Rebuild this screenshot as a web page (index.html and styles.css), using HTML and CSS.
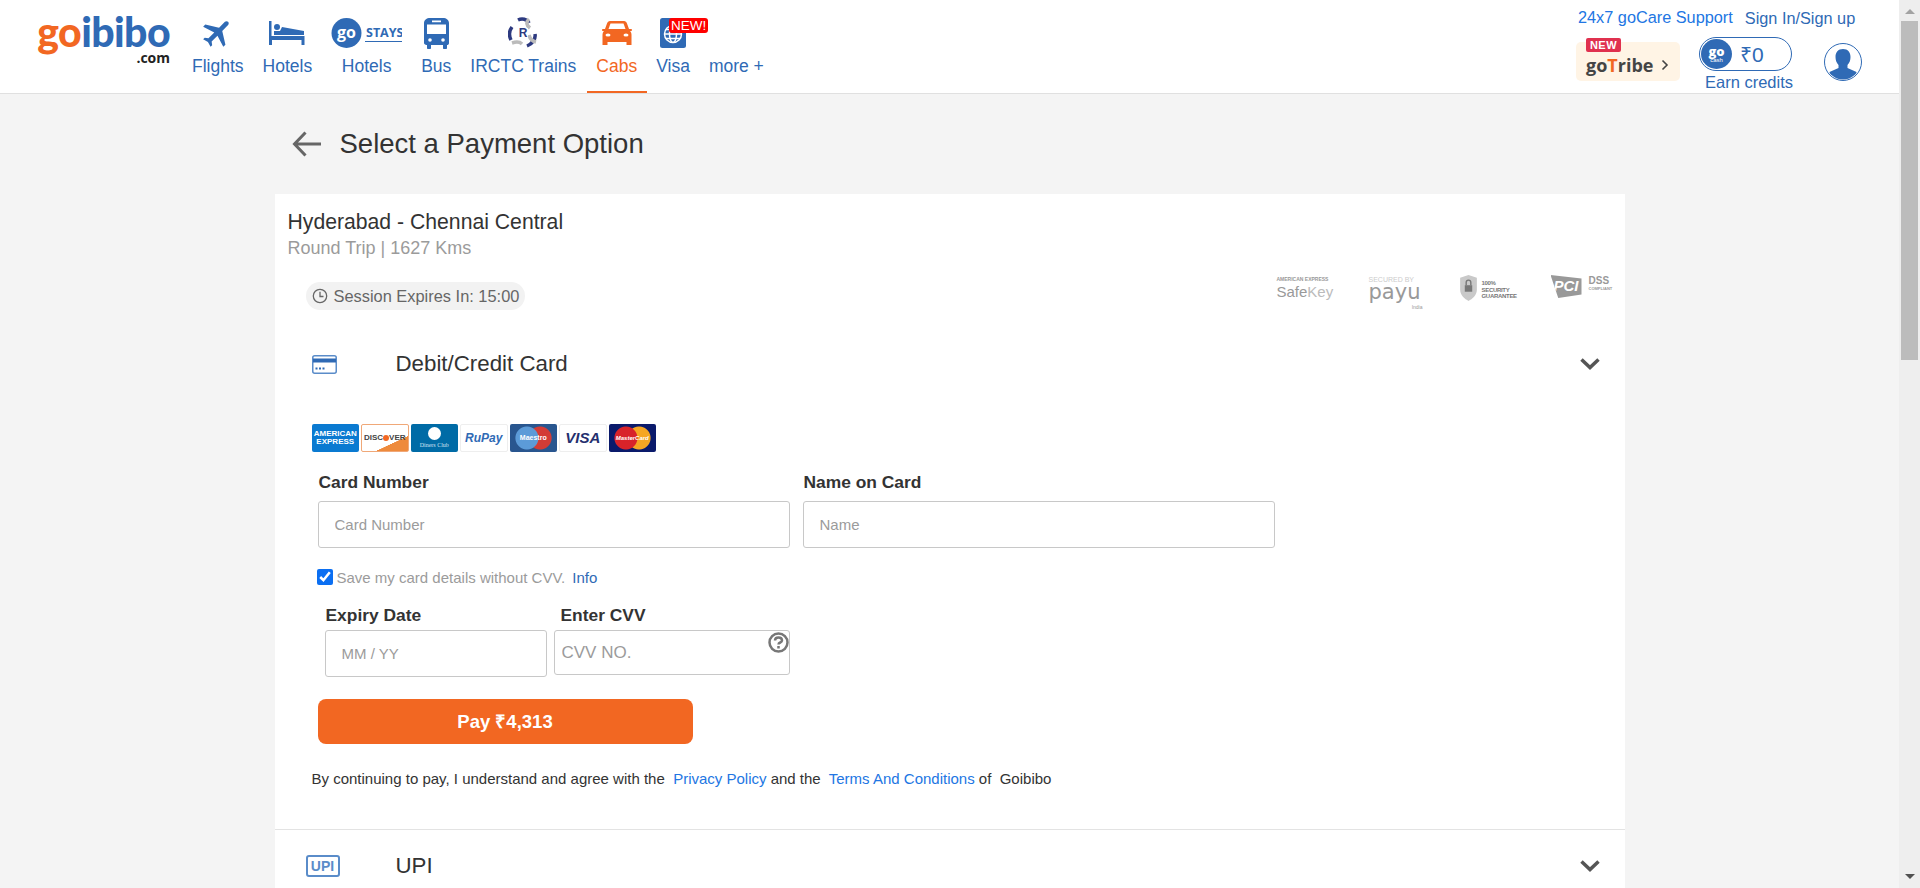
FILE: index.html
```html
<!DOCTYPE html>
<html lang="en">
<head>
    <meta charset="UTF-8">
    <meta name="viewport" content="width=device-width, initial-scale=1.0">
    <title>Select a Payment Option</title>
    <link rel="stylesheet" href="styles.css">
</head>
<body>
    <div class="page">
        <header class="topbar">
            <a class="logo">
                <span class="logo-word"><span class="logo-go">go</span>ibibo</span>
                <span class="logo-com">.com</span>
            </a>

            <nav class="nav">
                <a class="nav-item">
                    <span class="nav-icon">
                        <svg width="36" height="36" viewBox="0 0 24 24"><path fill="#2f6ab5" transform="rotate(45 12 12)" d="M21 16v-2l-8-5V3.5c0-.83-.67-1.5-1.5-1.5S10 2.67 10 3.5V9l-8 5v2l8-2.5V19l-2 1.5V22l3.5-1 3.5 1v-1.5L13 19v-5.5l8 2.5z"/></svg>
                    </span>
                    Flights
                </a>
                <a class="nav-item">
                    <span class="nav-icon">
                        <svg width="36" height="24" viewBox="0 0 36 24"><path fill="#2f6ab5" d="M0 0h2.500v15h33v9h-3v-5H3v5H0z"/><circle cx="8" cy="6" r="3" fill="#2f6ab5"/><path fill="#2f6ab5" d="M5 10h6l2-4 22 4v4H5z"/></svg>
                    </span>
                    Hotels
                </a>
                <a class="nav-item">
                    <span class="nav-icon">
                        <svg width="71" height="32" viewBox="0 0 71 32"><circle cx="15.500" cy="16" r="15" fill="#2f6ab5"/><text x="15.500" y="21" class="stays-go">go</text><text x="35" y="20" class="stays-word">STAYS</text><path stroke="#2f6ab5" stroke-width="1" d="M34 24.500h37"/></svg>
                    </span>
                    Hotels
                </a>
                <a class="nav-item">
                    <span class="nav-icon">
                        <svg width="25" height="31" viewBox="0 0 25 31"><path fill="#2f6ab5" d="M6 0h13c3.300 0 6 2 6 5v20c0 1.500-1 2-2 2v3c0 .6-.5 1-1 1h-2c-.6 0-1-.4-1-1v-3H7v3c0 .6-.4 1-1 1H4c-.5 0-1-.4-1-1v-3c-1 0-3-.5-3-2V5c0-3 2.700-5 6-5z"/><path fill="#fff" d="M3 6.500h19V16H3zM8 2.500h9v1.700H8z"/><circle cx="6" cy="22" r="1.800" fill="#fff"/><circle cx="19" cy="22" r="1.800" fill="#fff"/></svg>
                    </span>
                    Bus
                </a>
                <a class="nav-item">
                    <span class="nav-icon">
                        <svg width="30" height="32" viewBox="0 0 30 32"><path fill="none" stroke="#2d3a80" stroke-width="3.500" d="M10 3c4-2 9-1 11 3M27 17c1 5-3 10-8 12M3 23c-2-4-2-9 1-13"/><path fill="none" stroke="#bbb" stroke-width="3.500" d="M21 2c-3 3-3 6 1 9M28 25c-4-1-6-3-7-7M4 26c3-1 7-2 10 1"/><rect x="10" y="11" width="10" height="10" fill="#fff"/><text x="15" y="20" class="irctc-letter">R</text></svg>
                    </span>
                    IRCTC Trains
                </a>
                <a class="nav-item is-active">
                    <span class="nav-icon">
                        <svg width="30" height="24" viewBox="0 0 30 24"><path fill="#f26722" d="M8 0h14c1.500 0 2.500 1 3 2.500L27 8h2c.6 0 1 .5 1 1s-.4 1-1 1h-1c1 1 1.500 2 1.500 4v10h-5v-3H5.500v3h-5V14c0-2 .5-3 1.500-4H1c-.6 0-1-.5-1-1s.4-1 1-1h2l2-5.500C5.500 1 6.500 0 8 0z"/><path fill="#fff" d="M8.500 2.500h13L23.500 8h-17z"/><ellipse cx="6" cy="14" rx="2.500" ry="1.500" fill="#fff"/><ellipse cx="24" cy="14" rx="2.500" ry="1.500" fill="#fff"/></svg>
                    </span>
                    Cabs
                </a>
                <a class="nav-item">
                    <span class="nav-icon">
                        <svg width="26" height="30" viewBox="0 0 26 30"><rect width="26" height="30" rx="2.500" fill="#2f6ab5"/><g fill="none" stroke="#fff" stroke-width="1.500"><circle cx="13" cy="16" r="8.500"/><ellipse cx="13" cy="16" rx="3.500" ry="8.500"/><path d="M4.500 16h17M6 11.500h14M6 20.500h14"/></g></svg>
                        <span class="new-flag">NEW!</span>
                    </span>
                    Visa
                </a>
                <a class="nav-item nav-more">more +</a>
            </nav>

            <div class="account">
                <div class="account-links">
                    <a class="care-link">24x7 goCare Support</a>
                    <a class="sign-link">Sign In/Sign up</a>
                </div>
                <div class="account-row">
                    <a class="gotribe">
                        <span class="gotribe-new">NEW</span>
                        <span class="gotribe-word">go<span class="gotribe-t">T</span>ribe</span>
                        <svg width="8" height="12" viewBox="0 0 8 12"><path fill="none" stroke="#444" stroke-width="1.600" d="M1.500 1.500L6 6l-4.500 4.500"/></svg>
                    </a>
                    <div class="wallet">
                        <div class="wallet-pill">
                            <span class="gocash"><span class="gocash-go">go</span><span class="gocash-word">cash</span></span>
                            <span class="wallet-amount">₹0</span>
                        </div>
                        <a class="earn-link">Earn credits</a>
                    </div>
                    <svg class="avatar" width="38" height="38" viewBox="0 0 38 38"><defs><clipPath id="avatar-clip"><circle cx="19" cy="19" r="17.500"/></clipPath></defs><circle cx="19" cy="19" r="18.500" fill="#fff" stroke="#2f6ab5" stroke-width="1"/><path clip-path="url(#avatar-clip)" fill="#2f6ab5" d="M19 6c5 0 7.500 3.500 7.500 8 0 3-1 6-3 8v3l9 4v9H5.500v-9l9-4v-3c-2-2-3-5-3-8 0-4.500 2.500-8 7.500-8z"/></svg>
                </div>
            </div>
        </header>

        <main class="content">
            <div class="title-bar">
                <svg width="30" height="26" viewBox="0 0 30 26"><path fill="none" stroke="#666" stroke-width="3" d="M29 13H3M13.500 1.500L2.500 13l11 11.500"/></svg>
                <h1 class="page-title">Select a Payment Option</h1>
            </div>

            <section class="card">
                <div class="route">
                    <div class="route-name">Hyderabad - Chennai Central</div>
                    <div class="route-meta">Round Trip&nbsp;|&nbsp;1627 Kms</div>
                </div>

                <div class="session-row">
                    <div class="session-chip">
                        <svg width="16" height="16" viewBox="0 0 16 16"><circle cx="8" cy="8" r="6.700" fill="none" stroke="#666" stroke-width="1.300"/><path fill="none" stroke="#666" stroke-width="1.300" d="M8 3.800V8.500h3.500"/></svg>
                        Session Expires In:&nbsp;15:00
                    </div>
                    <div class="secure-logos">
                        <div class="safekey"><span class="safekey-top">AMERICAN EXPRESS</span><span class="safekey-word"><b>Safe</b>Key</span></div>
                        <div class="payu"><span class="payu-top">SECURED BY</span><span class="payu-word">payu</span><span class="payu-india">India</span></div>
                        <div class="guarantee">
                            <svg width="19" height="26" viewBox="0 0 18 28"><path fill="#c9c9c9" d="M9 0l9 3v13c0 6-5 10-9 12-4-2-9-6-9-12V3z"/><rect x="5" y="11" width="8" height="7" fill="#777"/><path fill="none" stroke="#777" stroke-width="1.500" d="M6.500 11V8a2.500 2.500 0 0 1 5 0v3"/></svg>
                            <span class="guarantee-word">100%<br>SECURITY<br>GUARANTEE</span>
                        </div>
                        <div class="pci">
                            <span class="pci-word">PCI</span>
                            <span class="pci-dss">DSS<small>COMPLIANT</small></span>
                        </div>
                    </div>
                </div>

                <div class="pay-head">
                    <svg class="pay-icon" width="25" height="19" viewBox="0 0 25 19"><rect x=".75" y=".75" width="23.500" height="17.500" rx="2" fill="none" stroke="#5a8cc9" stroke-width="1.500"/><rect x="1" y="3.500" width="23" height="4" fill="#2f6ab5"/><path fill="#2f6ab5" d="M3.500 12.500h2v2h-2zM7 12.500h2v2H7zM10.500 12.500h2v2h-2z"/></svg>
                    <span class="pay-title">Debit/Credit Card</span>
                    <svg class="chevron" width="20" height="12" viewBox="0 0 20 12"><path fill="none" stroke="#555" stroke-width="3.500" d="M1.500 1.500l8.500 8 8.500-8"/></svg>
                </div>

                <div class="pay-body">
                    <div class="brand-row">
                        <span class="brand brand-amex">AMERICAN<br>EXPRESS</span>
                        <span class="brand brand-discover">DISC<i></i>VER</span>
                        <span class="brand brand-diners"><i></i>Diners Club</span>
                        <span class="brand brand-rupay">RuPay</span>
                        <span class="brand brand-maestro">Maestro</span>
                        <span class="brand brand-visa">VISA</span>
                        <span class="brand brand-master">MasterCard</span>
                    </div>

                    <div class="field-row">
                        <label class="field field-wide">
                            <span class="field-label">Card Number</span>
                            <input class="field-input" type="text" placeholder="Card Number">
                        </label>
                        <label class="field field-wide">
                            <span class="field-label">Name on Card</span>
                            <input class="field-input" type="text" placeholder="Name">
                        </label>
                    </div>

                    <label class="save-row">
                        <input class="save-check" type="checkbox" checked>
                        <span>Save my card details without CVV.</span>
                        <a class="info-link">Info</a>
                    </label>

                    <div class="field-row field-row-small">
                        <label class="field field-expiry">
                            <span class="field-label">Expiry Date</span>
                            <input class="field-input" type="text" placeholder="MM / YY">
                        </label>
                        <label class="field field-cvv">
                            <span class="field-label">Enter CVV</span>
                            <input class="field-input" type="text" placeholder="CVV NO.">
                            <svg class="cvv-help" width="21" height="21" viewBox="0 0 21 21"><circle cx="10.500" cy="10.500" r="9" fill="none" stroke="#777" stroke-width="2.500"/><path fill="none" stroke="#777" stroke-width="2.500" d="M7 8.500c0-2 1.500-3 3.500-3s3.500 1 3.500 3c0 2.500-3.500 1.500-3.500 4"/><rect x="9.250" y="14" width="2.500" height="2.500" fill="#777"/></svg>
                        </label>
                    </div>

                    <button class="pay-button">Pay ₹4,313</button>

                    <p class="terms">By continuing to pay, I understand and agree with the&nbsp; <a>Privacy Policy</a> and the&nbsp; <a>Terms And Conditions</a> of&nbsp; Goibibo</p>
                </div>

                <div class="pay-head pay-head-upi">
                    <span class="upi-icon">UPI</span>
                    <span class="pay-title">UPI</span>
                    <svg class="chevron" width="20" height="12" viewBox="0 0 20 12"><path fill="none" stroke="#555" stroke-width="3.500" d="M1.500 1.500l8.500 8 8.500-8"/></svg>
                </div>
            </section>
        </main>
    </div>

    <div class="scrollbar">
        <span class="scroll-up"></span>
        <span class="scroll-thumb"></span>
        <span class="scroll-down"></span>
    </div>
</body>
</html>
```

FILE: styles.css
```css
:root {
    --blue: #2f6ab5;
    --link-blue: #2276e3;
    --orange: #f26722;
    --text-color: #333;
    --muted: #9b9b9b;
    --line: #c8c8c8;
    --background-color: #f4f4f4;
}

* {
    box-sizing: border-box;
}

html,
body {
    height: 888px;
    overflow: hidden;
}

body {
    margin: 0;
    display: flex;
    font-family: "Liberation Sans", Arial, sans-serif;
    color: var(--text-color);
    background-color: var(--background-color);
}

.page {
    flex: 1;
    min-width: 0;
}

/* top bar */
.topbar {
    display: flex;
    height: 94px;
    padding: 0 37px;
    background-color: #fff;
    border-bottom: 1px solid #e0e0e0;
}

.logo {
    display: flex;
    flex-direction: column;
    align-items: flex-end;
    width: 133px;
    margin-right: 12.500px;
    padding-top: 12px;
}

.logo-word {
    font-family: Lato, sans-serif;
    font-weight: 900;
    font-size: 41px;
    line-height: 40px;
    letter-spacing: -0.6px;
    color: var(--blue);
    white-space: nowrap;
}

.logo-go {
    color: var(--orange);
}

.logo-com {
    font-family: "Open Sans", sans-serif;
    font-weight: 700;
    font-size: 14px;
    line-height: 12px;
    color: #222;
}

.nav {
    display: flex;
}

.nav-item {
    display: flex;
    flex-direction: column;
    align-items: center;
    padding: 17px 9.500px 0;
    border-bottom: 2px solid transparent;
    font-size: 17.500px;
    line-height: 20px;
    color: var(--blue);
    white-space: nowrap;
}

.nav-icon {
    position: relative;
    display: flex;
    align-items: center;
    justify-content: center;
    height: 32px;
    margin-bottom: 7px;
}

.is-active {
    margin-left: 1px;
    color: var(--orange);
    border-bottom-color: var(--orange);
}

.nav-more {
    padding-top: 56px;
}

.new-flag {
    position: absolute;
    top: 1px;
    left: 9px;
    padding: 0 2px;
    font-size: 13.500px;
    line-height: 15px;
    color: #fff;
    background-color: #f00;
    border-radius: 3px;
}

.stays-go {
    font-family: "Open Sans", sans-serif;
    font-weight: 700;
    font-size: 16px;
    text-anchor: middle;
    fill: #fff;
}

.stays-word {
    font-family: "Open Sans", sans-serif;
    font-weight: 700;
    font-size: 12.500px;
    fill: var(--blue);
}

.irctc-letter {
    font-family: "Liberation Sans", sans-serif;
    font-weight: 700;
    font-size: 12px;
    text-anchor: middle;
    fill: #2d3a80;
}

.account {
    margin-left: auto;
    width: 286px;
}

.account-links {
    display: flex;
    gap: 12px;
    padding: 8px 0 0 2px;
    font-size: 16.300px;
    line-height: 18px;
}

.care-link {
    color: var(--link-blue);
}

.sign-link {
    margin-top: 1px;
    color: var(--blue);
}

.account-row {
    display: flex;
    align-items: flex-start;
    margin-top: 10px;
}

.gotribe {
    position: relative;
    display: flex;
    align-items: center;
    gap: 8px;
    width: 104px;
    height: 39px;
    margin: 5px 19px 0 0;
    padding: 7px 0 0 10px;
    background-color: #fff4e5;
    border-radius: 5px;
}

.gotribe-new {
    position: absolute;
    top: -4px;
    left: 10px;
    width: 35px;
    font-size: 11px;
    font-weight: 700;
    line-height: 14px;
    text-align: center;
    letter-spacing: 0.5px;
    color: #fff;
    background-color: #e0314f;
    border-radius: 2px;
}

.gotribe-word {
    font-family: "Open Sans", sans-serif;
    font-weight: 700;
    font-size: 18px;
    line-height: 20px;
    color: #444;
}

.gotribe-t {
    color: var(--orange);
}

.wallet {
    width: 93px;
    margin-right: 32px;
    text-align: right;
}

.wallet-pill {
    display: flex;
    align-items: center;
    gap: 8px;
    height: 34px;
    padding-left: 1px;
    border: 1px solid var(--blue);
    border-radius: 17px;
}

.gocash {
    display: flex;
    flex-direction: column;
    align-items: center;
    justify-content: center;
    width: 31px;
    height: 30px;
    color: #fff;
    background-color: var(--blue);
    border-radius: 50%;
}

.gocash-go {
    font-family: "Open Sans", sans-serif;
    font-weight: 800;
    font-size: 13px;
    line-height: 12px;
}

.gocash-word {
    font-size: 6px;
    line-height: 7px;
}

.wallet-amount {
    font-size: 21px;
    color: var(--blue);
}

.earn-link {
    display: block;
    margin: 2px -1px 0 0;
    font-size: 16.500px;
    line-height: 19px;
    color: var(--blue);
    white-space: nowrap;
}

.avatar {
    margin-top: 6px;
}

/* payment card */
.content {
    width: 1350px;
    margin: 0 auto;
}

.title-bar {
    display: flex;
    align-items: center;
    gap: 18px;
    height: 100px;
    padding-left: 17px;
}

.page-title {
    margin: 0;
    font-size: 27.500px;
    font-weight: 400;
}

.card {
    background-color: #fff;
}

.route {
    padding: 16px 13px 0;
}

.route-name {
    font-size: 21.200px;
    line-height: 24px;
}

.route-meta {
    margin-top: 3px;
    font-size: 18px;
    line-height: 22px;
    color: var(--muted);
}

.session-row {
    display: flex;
    justify-content: space-between;
    align-items: flex-start;
    height: 61px;
    margin-top: 16px;
    padding: 0 18px 0 31px;
}

.session-chip {
    display: flex;
    align-items: center;
    gap: 6px;
    height: 28px;
    margin-top: 7px;
    padding: 0 6px;
    font-size: 16.400px;
    color: #666;
    background-color: #f2f2f2;
    border-radius: 14px;
}

.secure-logos {
    display: flex;
    align-items: flex-start;
    color: #999;
}

.safekey {
    display: flex;
    flex-direction: column;
    width: 58px;
    margin-right: 34px;
}

.safekey-top {
    font-size: 5px;
    font-weight: 700;
    line-height: 8px;
    white-space: nowrap;
}

.safekey-word {
    font-size: 15px;
    line-height: 17px;
    color: #bbb;
}

.safekey-word b {
    font-weight: 400;
    color: #999;
}

.payu {
    display: flex;
    flex-direction: column;
    width: 54px;
    margin-right: 36px;
}

.payu-top {
    font-size: 7px;
    line-height: 9px;
    color: #ccc;
    white-space: nowrap;
}

.payu-word {
    font-family: "DejaVu Sans", sans-serif;
    font-size: 21px;
    line-height: 17px;
    color: #999;
}

.payu-india {
    align-self: flex-end;
    margin-top: 3px;
    font-size: 5px;
    line-height: 6px;
}

.guarantee {
    display: flex;
    gap: 4px;
    width: 57px;
    margin-right: 35px;
}

.guarantee svg {
    flex-shrink: 0;
}

.guarantee-word {
    padding-top: 5px;
    font-size: 6px;
    font-weight: 700;
    line-height: 6.500px;
    letter-spacing: -0.3px;
    color: #777;
}

.pci {
    display: flex;
    gap: 7px;
    width: 56px;
}

.pci-word {
    padding: 3px 3px 4px;
    font-size: 15px;
    font-weight: 700;
    font-style: italic;
    line-height: 16px;
    color: #fff;
    background-color: #999;
    clip-path: polygon(0 0, 100% 15%, 100% 85%, 25% 100%);
}

.pci-dss {
    display: flex;
    flex-direction: column;
    font-size: 10px;
    font-weight: 700;
    line-height: 11px;
    color: #999;
}

.pci-dss small {
    font-size: 4px;
    line-height: 5px;
}

.pay-head {
    display: flex;
    align-items: center;
    height: 56px;
    padding: 0 25px 0 37px;
}

.pay-icon {
    margin-right: 59px;
}

.pay-title {
    font-size: 22.300px;
}

.chevron {
    margin-left: auto;
}

.pay-body {
    padding: 32px 37px 40px;
    border-bottom: 1px solid #e3e3e3;
}

.brand-row {
    display: flex;
    gap: 2px;
}

.brand {
    display: flex;
    flex-wrap: wrap;
    align-items: center;
    justify-content: center;
    align-content: center;
    width: 47.500px;
    height: 28px;
    font-size: 8px;
    font-weight: 700;
    line-height: 8px;
    text-align: center;
    border-radius: 2px;
    white-space: nowrap;
}

.brand-amex {
    color: #fff;
    background-color: #0a7ad1;
}

.brand-discover {
    color: #444;
    background: linear-gradient(155deg, #fff 68%, #ee8a3c 69%);
    border: 1px solid #f0a878;
}

.brand-discover i {
    width: 6px;
    height: 6px;
    background-color: var(--orange);
    border-radius: 50%;
}

.brand-diners {
    font-family: "Liberation Serif", serif;
    font-size: 6px;
    font-weight: 400;
    color: #cfe3f2;
    background-color: #006ba6;
}

.brand-diners i {
    display: block;
    width: 13px;
    height: 13px;
    margin: 0 17px 1px;
    background-color: #fff;
    border-radius: 50%;
}

.brand-rupay {
    font-size: 12px;
    font-style: italic;
    color: #2f6ab5;
    background-color: #fff;
    border: 1px solid #eee;
}

.brand-maestro {
    font-size: 7px;
    color: #fff;
    background: radial-gradient(circle at 36% 50%, #5c9bd8 11px, transparent 12px), radial-gradient(circle at 64% 50%, #d33c36 11px, transparent 12px), #29568f;
}

.brand-visa {
    font-size: 15px;
    font-style: italic;
    color: #252f6e;
    background-color: #fff;
    border: 1px solid #eee;
}

.brand-master {
    font-size: 6px;
    font-style: italic;
    color: #fff;
    background: radial-gradient(circle at 36% 50%, #d8232a 11px, transparent 12px), radial-gradient(circle at 64% 50%, #f5a623 11px, transparent 12px), #0a1a6b;
}

.field-row {
    display: flex;
    gap: 13px;
    margin: 20px 0 0 6px;
}

.field {
    position: relative;
    display: flex;
    flex-direction: column;
}

.field-wide {
    width: 472px;
}

.field-label {
    padding-left: 1px;
    font-size: 17.400px;
    font-weight: 700;
    line-height: 20px;
}

.field-input {
    height: 47px;
    margin-top: 9px;
    padding: 0 16px;
    font-family: "Liberation Sans", Arial, sans-serif;
    font-size: 15px;
    border: 1px solid var(--line);
    border-radius: 3px;
    outline: none;
}

.field-input::placeholder {
    color: var(--muted);
}

.save-row {
    display: flex;
    align-items: center;
    gap: 4px;
    height: 16px;
    margin: 21px 0 0 5px;
    font-size: 15px;
    color: var(--muted);
}

.save-check {
    width: 16px;
    height: 16px;
    margin: 0;
    accent-color: #0b6ff2;
}

.info-link {
    margin-left: 3px;
    color: var(--blue);
}

.field-row-small {
    gap: 7px;
    margin: 20px 0 0 13px;
}

.field-row-small .field-input {
    margin-top: 5px;
}

.field-expiry {
    width: 222px;
}

.field-cvv {
    width: 236px;
}

.field-cvv .field-label {
    padding-left: 7px;
}

.field-cvv .field-input {
    height: 45px;
    padding: 0 6px 0 7px;
    font-size: 17px;
}

.cvv-help {
    position: absolute;
    top: 27px;
    right: 1px;
}

.pay-button {
    display: block;
    width: 375px;
    height: 45px;
    margin: 22px 0 0 6px;
    padding-bottom: 3px;
    font-family: "Liberation Sans", Arial, sans-serif;
    font-size: 18.500px;
    font-weight: 700;
    color: #fff;
    background-color: var(--orange);
    border: none;
    border-radius: 8px;
    cursor: pointer;
}

.terms {
    margin: 25px 0 0;
    font-size: 15px;
    line-height: 20px;
}

.terms a {
    color: var(--link-blue);
}

.pay-head-upi {
    height: 72px;
    padding-left: 31px;
}

.upi-icon {
    width: 34px;
    height: 22px;
    margin-right: 56px;
    font-size: 14px;
    font-weight: 700;
    line-height: 18px;
    text-align: center;
    color: #5a8cc9;
    border: 2px solid #5a8cc9;
    border-radius: 3px;
}

/* drawn scrollbar, the shot has one along the right edge */
.scrollbar {
    display: flex;
    flex-direction: column;
    align-items: center;
    width: 21px;
    height: 888px;
    background-color: #eee;
}

.scroll-up,
.scroll-down {
    width: 0;
    height: 0;
    border-left: 5px solid transparent;
    border-right: 5px solid transparent;
}

.scroll-up {
    margin-top: 9px;
    border-bottom: 5px solid #a3a3a3;
}

.scroll-thumb {
    width: 17px;
    height: 339px;
    margin-top: 7px;
    background-color: #bcbcbc;
}

.scroll-down {
    margin-top: auto;
    margin-bottom: 9px;
    border-top: 5px solid #505050;
}
```
